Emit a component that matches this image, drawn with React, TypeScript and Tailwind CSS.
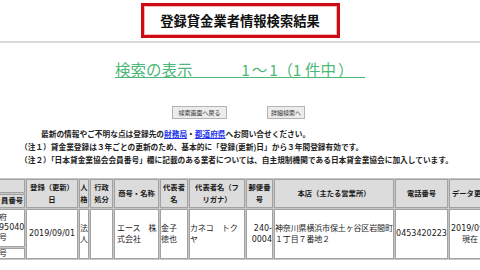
import React from "react";

type Line = string | [string, string];
type Cell = { pos: string; lines: Line[]; align: string; lead?: string };

const headers: Cell[] = [
  { pos: "col-start-1 row-start-1", lines: [""], align: "items-center" },
  { pos: "col-start-1 row-start-2", lines: ["員番号"], align: "items-end pr-[1px]" },
  { pos: "col-start-2 row-start-1 row-span-2", lines: ["登録（更新）", "日"], align: "items-center" },
  { pos: "col-start-3 row-start-1 row-span-2", lines: ["人", "格"], align: "items-center" },
  { pos: "col-start-4 row-start-1 row-span-2", lines: ["行政", "処分"], align: "items-center" },
  { pos: "col-start-5 row-start-1 row-span-2", lines: ["商号・名称"], align: "items-center" },
  { pos: "col-start-6 row-start-1 row-span-2", lines: ["代表者", "名"], align: "items-center" },
  { pos: "col-start-7 row-start-1 row-span-2", lines: ["代表者名（フ", "リガナ）"], align: "items-center" },
  { pos: "col-start-8 row-start-1 row-span-2", lines: ["郵便番", "号"], align: "items-center" },
  { pos: "col-start-9 row-start-1 row-span-2", lines: ["本店（主たる営業所）"], align: "items-center" },
  { pos: "col-start-10 row-start-1 row-span-2", lines: ["電話番号"], align: "items-center" },
  { pos: "col-start-11 row-start-1 row-span-2", lines: ["データ更新日"], align: "items-start pl-[2px]" },
];

const data: Cell[] = [
  { pos: "col-start-1 row-start-3", lines: ["府", "95040", "号"], align: "items-start", lead: "leading-[10px]" },
  { pos: "col-start-1 row-start-4", lines: ["号"], align: "items-start" },
  { pos: "col-start-2 row-start-3 row-span-2", lines: ["2019/09/01"], align: "items-center" },
  { pos: "col-start-3 row-start-3 row-span-2", lines: ["法", "人"], align: "items-start" },
  { pos: "col-start-4 row-start-3 row-span-2", lines: [""], align: "items-start" },
  { pos: "col-start-5 row-start-3 row-span-2", lines: ["エース　株", "式会社"], align: "items-start pl-[2px]" },
  { pos: "col-start-6 row-start-3 row-span-2", lines: ["金子", "徳也"], align: "items-start" },
  { pos: "col-start-7 row-start-3 row-span-2", lines: ["カネコ　トク", "ヤ"], align: "items-start" },
  { pos: "col-start-8 row-start-3 row-span-2", lines: ["240-", "0004"], align: "items-end" },
  { pos: "col-start-9 row-start-3 row-span-2", lines: ["神奈川県横浜市保土ヶ谷区岩間町", "１丁目７番地２"], align: "items-start tracking-[-0.15px]" },
  { pos: "col-start-10 row-start-3 row-span-2", lines: ["0453420223"], align: "items-center" },
  { pos: "col-start-11 row-start-3 row-span-2", lines: ["2019/09/01", ["現在", "ml-[11px]"]], align: "items-start pl-[1px]" },
];

function CellView({ c, header }: { c: Cell; header: boolean }) {
  return (
    <div
      className={`${c.pos} flex flex-col justify-center ${c.align} overflow-visible whitespace-nowrap border border-[#a2a2a2] ${
        header ? "bg-[#dcdcdc] font-bold text-[7.3px] leading-[12px]" : `bg-white text-[8px] ${c.lead ?? "leading-[11.5px]"}`
      }`}
    >
      {c.lines.map((l, i) =>
        typeof l === "string" ? (
          <span key={i}>{l}</span>
        ) : (
          <span key={i} className={l[1]}>
            {l[0]}
          </span>
        )
      )}
    </div>
  );
}

export default function App() {
  return (
    <div className="w-[480px] h-[270px] overflow-hidden bg-white text-[#1a1a1a] font-['Noto_Sans_CJK_JP',sans-serif]">
      <div className="flex justify-center pt-[3px]">
        <div className="w-[199px] h-[35px] border-[3px] border-[#cf0a14]">
          <div className="h-full border border-[#f0b8b8] flex items-center justify-center text-[13.3px] font-bold leading-none text-[#111]">
            登録貸金業者情報検索結果
          </div>
        </div>
      </div>
      <div className="mt-[3px] h-[2px] bg-[#d9d9d9]" />
      <div className="mt-[18px] flex justify-center">
        <div className="w-[250px] h-[17px] border-b border-[#4cb878] flex text-[15.5px] leading-[16px] text-[#4cb878] whitespace-nowrap">
          <span>検索の表示</span>
          <span className="ml-[49px] w-[8px] flex justify-center">1</span>
          <span className="w-[20px] flex justify-center">〜</span>
          <span className="w-[8px] flex justify-center">1</span>
          <span>（</span>
          <span className="w-[8px] flex justify-center">1</span>
          <span className="ml-[4px]">件中</span>
          <span className="ml-[2px]">）</span>
        </div>
      </div>
      <div className="mt-[28px] flex justify-center gap-[40px] pr-[3px]">
        <div className="w-[55px] h-[13px] flex items-center justify-center border border-[#b4b4b4] bg-[#ececec] text-[6px] leading-none text-[#333]">
          検索画面へ戻る
        </div>
        <div className="w-[38px] h-[13px] flex items-center justify-center border border-[#b4b4b4] bg-[#ececec] text-[6px] leading-none text-[#333]">
          詳細検索へ
        </div>
      </div>
      <div className="mt-[8px] px-[20px] text-[7.7px] leading-[13px] font-bold text-[#222] whitespace-nowrap">
        <div className="pl-[21px]">
          最新の情報やご不明な点は登録先の
          <span className="text-[#2233ee] underline">財務局</span>・
          <span className="text-[#2233ee] underline">都道府県</span>
          へお問い合せください。
        </div>
        <div>（注１）貸金業登録は３年ごとの更新のため、基本的に「登録(更新)日」から３年間登録有効です。</div>
        <div>（注２）「日本貸金業協会会員番号」欄に記載のある業者については、自主規制機関である日本貸金業協会に加入しています。</div>
      </div>
      <div className="mt-[12px] ml-[-3px] w-max bg-[#c6c6c6] p-px grid gap-px grid-cols-[27px_52px_10px_23px_45px_28px_56px_27px_120px_53px_61px] grid-rows-[14px_14px_38px_11px] font-['DejaVu_Sans','Noto_Sans_CJK_JP',sans-serif]">
        {headers.map((c, i) => (
          <CellView key={"h" + i} c={c} header />
        ))}
        {data.map((c, i) => (
          <CellView key={"d" + i} c={c} header={false} />
        ))}
      </div>
    </div>
  );
}
